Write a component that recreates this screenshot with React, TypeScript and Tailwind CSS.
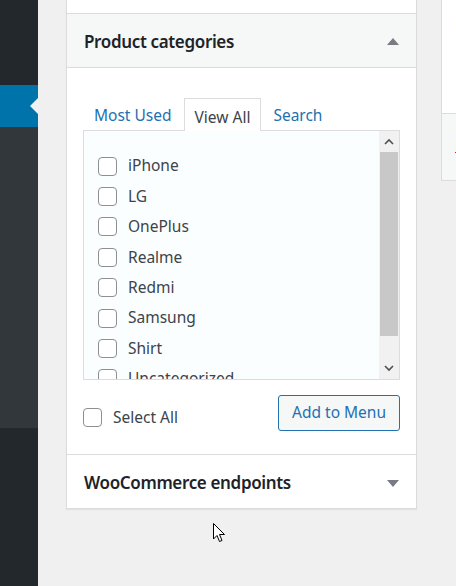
import { useState } from "react";

const categories = ["iPhone", "LG", "OnePlus", "Realme", "Redmi", "Samsung", "Shirt", "Uncategorized"];

function Box({ checked, onChange }: { checked: boolean; onChange: () => void }) {
    return (
        <span
            onClick={onChange}
            className="w-[19px] h-[19px] shrink-0 rounded-[4px] border border-[#8c8f94] bg-white flex items-center justify-center"
        >
            {checked && <span className="w-[9px] h-[9px] bg-[#2271b1] rounded-[2px]" />}
        </span>
    );
}

export default function App() {
    const [tab, setTab] = useState("View All");
    const [picked, setPicked] = useState<string[]>([]);
    const [all, setAll] = useState(false);

    const toggle = (c: string) =>
        setPicked(p => (p.includes(c) ? p.filter(x => x !== c) : [...p, c]));

    return (
        <div
            className="relative flex w-[456px] h-[586px] overflow-hidden bg-[#f0f0f1] text-[#3c434a]"
            style={{ fontFamily: '"Noto Sans", "Open Sans", sans-serif' }}
        >
            {/* admin sidebar */}
            <div className="w-[38px] shrink-0 flex flex-col">
                <div className="h-[85px] bg-[#23282d]" />
                <div className="relative h-[42px] bg-[#0073aa]">
                    <span className="absolute right-0 top-[13px] w-0 h-0 border-y-[8px] border-y-transparent border-r-[8px] border-r-[#f1f1f1]" />
                </div>
                <div className="h-[301px] bg-[#32373c]" />
                <div className="flex-1 bg-[#23282d]" />
            </div>

            {/* menu items column */}
            <div className="w-[351px] ml-[28px] shrink-0 self-start bg-white border-x border-b border-[#dcdcde] shadow-[0_1px_1px_rgba(0,0,0,0.06)]">
                <div className="h-[14px] border-b border-[#dcdcde]" />

                <div className="h-[54px] bg-[#f6f7f7] border-b border-[#dcdcde] flex items-center justify-between pl-[17px] pr-[17px] pt-[2px]">
                    <h3 className="text-[17px] font-semibold text-[#1d2327] tracking-[-0.35px]">Product categories</h3>
                    <span className="w-0 h-0 border-x-[6px] border-x-transparent border-b-[7px] border-b-[#787c82]" />
                </div>

                <div className="px-[16px] pt-[30px]">
                    <div className="flex items-end h-[32px] text-[15.5px]">
                        {["Most Used", "View All", "Search"].map(t => (
                            <button
                                key={t}
                                onClick={() => setTab(t)}
                                className={
                                    t === tab
                                        ? "h-[33px] px-[10px] pt-[5px] -mb-px border border-b-0 border-[#dcdcde] bg-white text-[#3c434a] relative z-10 mx-[1px]"
                                        : "h-[32px] pt-[4px] px-[11px] text-[#2271b1]"
                                }
                            >
                                {t}
                            </button>
                        ))}
                    </div>

                    <div className="h-[250px] border border-[#dcdcde] bg-[#fbfefe] flex">
                        <ul className="flex-1 overflow-hidden pt-[20px] pl-[14px]">
                            {categories.map(c => (
                                <li key={c} className="h-[30.4px] flex items-center gap-[11px] text-[15.5px] leading-none">
                                    <Box checked={all || picked.includes(c)} onChange={() => toggle(c)} />
                                    <span>{c}</span>
                                </li>
                            ))}
                        </ul>
                        <div className="w-[20px] shrink-0 bg-[#f1f1f1] flex flex-col">
                            <div className="h-[21px] flex items-center justify-center">
                                <svg width="10" height="7" viewBox="0 0 10 7" fill="none" stroke="#505050" strokeWidth="1.6">
                                    <path d="M1 6 L5 2 L9 6" />
                                </svg>
                            </div>
                            <div className="h-[184px] bg-[#c8c8c8] mx-[1px]" />
                            <div className="flex-1" />
                            <div className="h-[21px] flex items-center justify-center">
                                <svg width="10" height="7" viewBox="0 0 10 7" fill="none" stroke="#505050" strokeWidth="1.6">
                                    <path d="M1 1 L5 5 L9 1" />
                                </svg>
                            </div>
                        </div>
                    </div>

                    <div className="flex items-start justify-between pt-[15px] pb-[23px]">
                        <label className="flex items-center gap-[11px] text-[15.5px] mt-[11px]">
                            <Box checked={all} onChange={() => setAll(a => !a)} />
                            <span>Select All</span>
                        </label>
                        <button className="h-[36px] px-[13px] rounded-[3px] border border-[#2271b1] bg-[#f6f7f7] text-[#2271b1] text-[15.5px]">
                            Add to Menu
                        </button>
                    </div>
                </div>

                <div className="h-[54px] border-t border-[#dcdcde] flex items-center justify-between pl-[17px] pr-[17px] pt-[3px]">
                    <h3 className="text-[17px] font-semibold text-[#1d2327] tracking-[-0.35px]">WooCommerce endpoints</h3>
                    <span className="w-0 h-0 border-x-[6px] border-x-transparent border-t-[7px] border-t-[#787c82]" />
                </div>
            </div>

            {/* menu structure column, cut off at the edge */}
            <div className="w-[200px] ml-[24px] shrink-0 self-start border-l border-b border-[#dcdcde]">
                <div className="h-[113px] bg-white pl-[13px] pt-[12px] text-[15px] text-[#c47a4a]">M</div>
                <div className="h-[67px] bg-[#f6f7f7] border-t border-[#dcdcde] pl-[13px] pt-[20px] text-[15px] text-[#b32d2e] underline">D</div>
            </div>

            {/* mouse pointer */}
            <svg className="absolute left-[213px] top-[523px]" width="13" height="20" viewBox="0 0 13 20">
                <path d="M0.5 0.5 L0.5 16 L4 12.5 L6.5 18.5 L9 17.5 L6.5 11.5 L11.5 11.5 Z" fill="white" stroke="black" strokeWidth="1" />
            </svg>
        </div>
    );
}
